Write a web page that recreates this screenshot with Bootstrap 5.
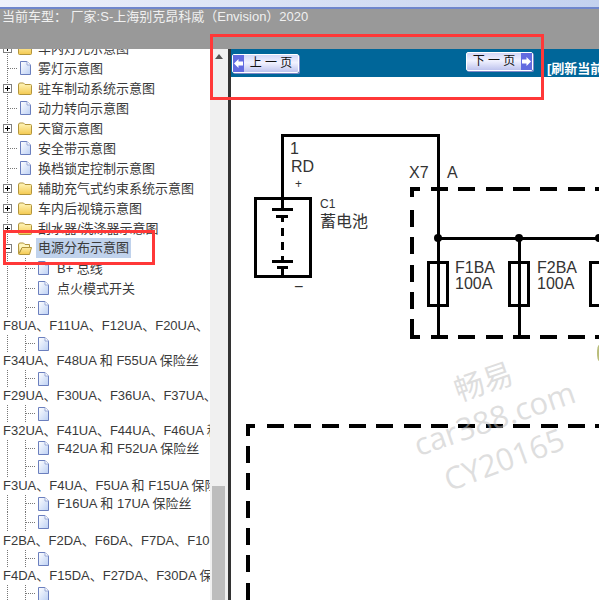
<!DOCTYPE html>
<html lang="zh-CN">
<head>
  <meta charset="UTF-8">
  <meta name="viewport" content="width=device-width, initial-scale=1.0">
  <title>电源分布示意图</title>
  <link href="https://cdn.jsdelivr.net/npm/bootstrap@5.3.0/dist/css/bootstrap.min.css" rel="stylesheet">
  <style>
    body { font-family: "Liberation Sans", "Noto Sans CJK SC", sans-serif; font-size: 13px; color: #3a3a3a; background: #fff; }
    .app-frame { width: 599px; height: 600px; }

    .top-strip { height: 9px; background: linear-gradient(90deg, #eef1fb, #c3d1ef); border-bottom: 2px solid #6f86cc; }
    .car-bar { height: 40px; background: #999; color: #f0f0f0; font-size: 13px; line-height: 16px; padding: 0 0 0 2px; }

    .tree-pane { width: 210px; }
    .tree-list { margin-top: -11px; }
    .tree-row { height: 20px; white-space: nowrap; flex-shrink: 0; }
    .h-16 { height: 16px; }
    .h-17 { height: 17px; }
    .h-18 { height: 18px; }
    .h-19 { height: 19px; }
    .h-21 { height: 21px; }

    /* dotted tree guides */
    .guide-one { background-image: linear-gradient(#777 50%, transparent 50%); background-size: 1px 2px; background-position: 7px 0; background-repeat: repeat-y; }
    .guide-two {
      background-image: linear-gradient(#777 50%, transparent 50%), linear-gradient(#777 50%, transparent 50%);
      background-size: 1px 2px, 1px 2px;
      background-position: 7px 0, 25px 0;
      background-repeat: repeat-y, repeat-y;
    }
    .dots-one { width: 10px; margin-left: 8px; height: 1px; background: linear-gradient(90deg, #777 50%, transparent 50%) 0 0/2px 1px; }
    .dots-two { width: 10px; margin-left: 26px; height: 1px; background: linear-gradient(90deg, #777 50%, transparent 50%) 0 0/2px 1px; }

    .plus-box { width: 9px; height: 9px; margin-left: 3px; margin-right: 6px; background: #fff; flex-shrink: 0; }
    .node-icon { width: 14px; height: 16px; flex-shrink: 0; }
    .node-text { margin-left: 5px; padding: 0 1px; line-height: 19px; }
    .node-text.leaf-gap { margin-left: 6px; }
    .node-selected { background: #c0d2ec; margin-left: 4px; padding: 0 2px; }
    .wrap-text { padding-left: 3px; line-height: 17px; background: #fff; }

    .side-scroll { width: 18px; background: #f0f0f0; }
    .scroll-arrow { border: 4px solid transparent; border-bottom: 5px solid #555; border-top: 0; margin: 5px auto 0; width: 0; }
    .scroll-thumb { width: 13px; height: 114px; background: #bdbdbd; margin-left: 2px; }
    .pane-split { width: 3px; background: #333; }

    .tool-band { height: 28px; background: #006699; white-space: nowrap; flex-shrink: 0; }
    .page-btn { width: 67px; height: 19px; padding: 0; border: 1px solid #fff; border-radius: 2px; background: linear-gradient(#d3d7f7, #f1f2ff 45%, #bfc4ee); color: #111; font-size: 12px; line-height: 17px; flex-shrink: 0; box-shadow: 1px 1px 0 #8088c8; }
    .page-btn:hover { background: #dfe2fb; color: #111; }
    .btn-prev { margin: 5px 0 0 1px; }
    .btn-next { margin: 3px 0 0 167px; }
    .btn-arrow { width: 11px; height: 17px; background: #626be0; flex-shrink: 0; }
    .refresh-link { color: #fff; font-weight: 700; font-size: 13px; margin: 12px 0 0 14px; line-height: 16px; }

    .wiring { display: block; }
    .wire { fill: none; stroke: #000; stroke-width: 3; shape-rendering: crispEdges; }
    .wire-dash { fill: none; stroke: #000; stroke-width: 3.6; stroke-dasharray: 17 10.35; shape-rendering: crispEdges; }
    .wire-label { font-family: "Liberation Sans", "Noto Sans CJK SC", sans-serif; font-size: 16px; fill: #333; }
    .wire-small { font-size: 12px; }
    .mark-text { font-family: "Open Sans", "Noto Sans CJK SC", sans-serif; fill: #bdbdbd; fill-opacity: .5; }

    .red-frame { position: absolute; border: 3px solid #ff3838; pointer-events: none; }
    .frame-top { left: 210px; top: 34px; width: 334px; height: 66px; }
    .frame-tree { left: 3px; top: 230px; width: 152px; height: 35px; }
  </style>
</head>
<body>
  <svg width="0" height="0" class="position-absolute">
    <defs>
      <linearGradient id="docFill" x1="0" y1="0" x2="1" y2="1"><stop offset="0" stop-color="#fff"/><stop offset="1" stop-color="#bcd0f4"/></linearGradient>
      <linearGradient id="folderFill" x1="0" y1="0" x2="0" y2="1"><stop offset="0" stop-color="#fff6bd"/><stop offset="1" stop-color="#f4c94f"/></linearGradient>
      <symbol id="doc" viewBox="0 0 14 16">
        <path d="M2.5 1.5H9L12.5 5V14.5H2.5Z" fill="url(#docFill)" stroke="#6b7fbe"/>
        <path d="M9 1.5V5H12.5" fill="#fff" stroke="#9aaad8"/>
      </symbol>
      <symbol id="folder" viewBox="0 0 14 16">
        <path d="M.5 5V13.5Q.5 14.5 1.5 14.5H12.5Q13.5 14.5 13.5 13.5V5.5Q13.5 4.5 12.5 4.5H7L5.5 3H2Q.5 3 .5 5Z" fill="url(#folderFill)" stroke="#b2953c"/>
      </symbol>
      <symbol id="folderOpen" viewBox="0 0 14 16">
        <path d="M.5 5V13.5Q.5 14.5 1.5 14.5H11.5L13.5 7.5H4L1.5 13" fill="url(#folderFill)" stroke="#b2953c"/>
        <path d="M.5 5Q.5 3 2 3H5.5L7 4.5H11.5V7.5H4L1 13.5Z" fill="#fff6bd" stroke="#b2953c"/>
      </symbol>
      <symbol id="plus" viewBox="0 0 9 9">
        <rect x=".5" y=".5" width="8" height="8" fill="#fff" stroke="#7f7f7f"/><path d="M2 4.5H7M4.5 2V7" stroke="#000"/>
      </symbol>
      <symbol id="minus" viewBox="0 0 9 9">
        <rect x=".5" y=".5" width="8" height="8" fill="#fff" stroke="#7f7f7f"/><path d="M2 4.5H7" stroke="#000"/>
      </symbol>
    </defs>
  </svg>

  <div class="app-frame position-relative d-flex flex-column overflow-hidden">
    <div class="top-strip flex-shrink-0"></div>
    <div class="car-bar flex-shrink-0">当前车型： 厂家:S-上海别克昂科威（Envision）2020</div>

    <div class="d-flex flex-grow-1 overflow-hidden">
      <!-- tree -->
      <div class="tree-pane overflow-hidden flex-shrink-0">
        <div class="tree-list d-flex flex-column">
          <div class="tree-row guide-one d-flex align-items-center"><svg class="plus-box"><use href="#plus"/></svg><svg class="node-icon"><use href="#folder"/></svg><span class="node-text">车内灯光示意图</span></div>
          <div class="tree-row guide-one d-flex align-items-center"><span class="dots-one"></span><svg class="node-icon"><use href="#doc"/></svg><span class="node-text">雾灯示意图</span></div>
          <div class="tree-row guide-one d-flex align-items-center"><svg class="plus-box"><use href="#plus"/></svg><svg class="node-icon"><use href="#folder"/></svg><span class="node-text">驻车制动系统示意图</span></div>
          <div class="tree-row guide-one d-flex align-items-center"><span class="dots-one"></span><svg class="node-icon"><use href="#doc"/></svg><span class="node-text">动力转向示意图</span></div>
          <div class="tree-row guide-one d-flex align-items-center"><svg class="plus-box"><use href="#plus"/></svg><svg class="node-icon"><use href="#folder"/></svg><span class="node-text">天窗示意图</span></div>
          <div class="tree-row guide-one d-flex align-items-center"><span class="dots-one"></span><svg class="node-icon"><use href="#doc"/></svg><span class="node-text">安全带示意图</span></div>
          <div class="tree-row guide-one d-flex align-items-center"><span class="dots-one"></span><svg class="node-icon"><use href="#doc"/></svg><span class="node-text">换档锁定控制示意图</span></div>
          <div class="tree-row guide-one d-flex align-items-center"><svg class="plus-box"><use href="#plus"/></svg><svg class="node-icon"><use href="#folder"/></svg><span class="node-text">辅助充气式约束系统示意图</span></div>
          <div class="tree-row guide-one d-flex align-items-center"><svg class="plus-box"><use href="#plus"/></svg><svg class="node-icon"><use href="#folder"/></svg><span class="node-text">车内后视镜示意图</span></div>
          <div class="tree-row guide-one d-flex align-items-center"><svg class="plus-box"><use href="#plus"/></svg><svg class="node-icon"><use href="#folder"/></svg><span class="node-text">刮水器/洗涤器示意图</span></div>
          <div class="tree-row guide-one d-flex align-items-center"><svg class="plus-box"><use href="#minus"/></svg><svg class="node-icon"><use href="#folderOpen"/></svg><span class="node-selected">电源分布示意图</span></div>

          <div class="tree-row guide-two d-flex align-items-center"><span class="dots-two"></span><svg class="node-icon"><use href="#doc"/></svg><span class="node-text leaf-gap">B+ 总线</span></div>
          <div class="tree-row guide-two d-flex align-items-center"><span class="dots-two"></span><svg class="node-icon"><use href="#doc"/></svg><span class="node-text leaf-gap">点火模式开关</span></div>
          <div class="tree-row h-19 guide-two d-flex align-items-center"><span class="dots-two"></span><svg class="node-icon"><use href="#doc"/></svg></div>
          <div class="tree-row h-18 wrap-text">F8UA、F11UA、F12UA、F20UA、</div>
          <div class="tree-row h-17 guide-two d-flex align-items-center"><span class="dots-two"></span><svg class="node-icon"><use href="#doc"/></svg></div>
          <div class="tree-row h-18 wrap-text">F34UA、F48UA 和 F55UA 保险丝</div>
          <div class="tree-row h-17 guide-two d-flex align-items-center"><span class="dots-two"></span><svg class="node-icon"><use href="#doc"/></svg></div>
          <div class="tree-row h-18 wrap-text">F29UA、F30UA、F36UA、F37UA、</div>
          <div class="tree-row h-17 guide-two d-flex align-items-center"><span class="dots-two"></span><svg class="node-icon"><use href="#doc"/></svg></div>
          <div class="tree-row h-18 wrap-text">F32UA、F41UA、F44UA、F46UA 和</div>
          <div class="tree-row h-16 guide-two d-flex align-items-center"><span class="dots-two"></span><svg class="node-icon"><use href="#doc"/></svg><span class="node-text leaf-gap">F42UA 和 F52UA 保险丝</span></div>
          <div class="tree-row h-21 guide-two d-flex align-items-center"><span class="dots-two"></span><svg class="node-icon"><use href="#doc"/></svg></div>
          <div class="tree-row h-18 wrap-text">F3UA、F4UA、F5UA 和 F15UA 保险丝</div>
          <div class="tree-row h-17 guide-two d-flex align-items-center"><span class="dots-two"></span><svg class="node-icon"><use href="#doc"/></svg><span class="node-text leaf-gap">F16UA 和 17UA 保险丝</span></div>
          <div class="tree-row guide-two d-flex align-items-center"><span class="dots-two"></span><svg class="node-icon"><use href="#doc"/></svg></div>
          <div class="tree-row h-18 wrap-text">F2BA、F2DA、F6DA、F7DA、F10DA</div>
          <div class="tree-row h-17 guide-two d-flex align-items-center"><span class="dots-two"></span><svg class="node-icon"><use href="#doc"/></svg></div>
          <div class="tree-row h-18 wrap-text">F4DA、F15DA、F27DA、F30DA 保险丝</div>
          <div class="tree-row h-17 guide-two d-flex align-items-center"><span class="dots-two"></span><svg class="node-icon"><use href="#doc"/></svg></div>
        </div>
      </div>

      <!-- scrollbar of the tree -->
      <div class="side-scroll d-flex flex-column flex-shrink-0">
        <div class="scroll-arrow"></div>
        <div class="scroll-thumb mt-auto"></div>
      </div>
      <div class="pane-split flex-shrink-0"></div>

      <!-- diagram page -->
      <div class="flex-grow-1 d-flex flex-column overflow-hidden">
        <div class="tool-band d-flex align-items-start overflow-hidden">
          <button type="button" class="btn page-btn btn-prev d-flex align-items-center">
            <span class="btn-arrow d-flex align-items-center justify-content-center"><svg width="9" height="9" viewBox="0 0 9 9"><path d="M0 4.5L4.5 0V2.5H9V6.5H4.5V9Z" fill="#fff"/></svg></span>
            <span class="flex-grow-1 text-center">上 一 页</span>
          </button>
          <button type="button" class="btn page-btn btn-next d-flex align-items-center">
            <span class="flex-grow-1 text-center">下 一 页</span>
            <span class="btn-arrow d-flex align-items-center justify-content-center"><svg width="9" height="9" viewBox="0 0 9 9"><path d="M9 4.5L4.5 0V2.5H0V6.5H4.5V9Z" fill="#fff"/></svg></span>
          </button>
          <span class="refresh-link">[刷新当前页]</span>
        </div>

        <svg class="wiring" width="368" height="523" viewBox="231 77 368 523">
          <!-- battery -->
          <path class="wire" d="M282 198V135H438V337"/>
          <rect class="wire" x="255.5" y="198.5" width="55" height="78"/>
          <path class="wire" d="M272 209.5H293M276 216H288M282.5 198V209M282.5 216V222M282.5 228V236M282.5 242V250M282.5 256V261M272 261.5H293M277 267.5H288M282.5 267V277"/>
          <text class="wire-label" x="290" y="154">1</text>
          <text class="wire-label" x="291" y="172">RD</text>
          <text class="wire-label wire-small" x="295" y="188">+</text>
          <text class="wire-label" x="294" y="292">−</text>
          <text class="wire-label wire-small" x="320" y="208">C1</text>
          <text class="wire-label" x="320" y="227">蓄电池</text>

          <!-- fuse block X7 -->
          <text class="wire-label" x="409" y="178">X7</text>
          <text class="wire-label" x="447" y="178">A</text>
          <path class="wire-dash" d="M412 197V189H420" stroke-dasharray="none"/>
          <path class="wire-dash" d="M431 189H599"/>
          <path class="wire-dash" d="M412 210V337"/>
          <path class="wire-dash" d="M412 328V337H420" stroke-dasharray="none"/>
          <path class="wire-dash" d="M431 337H599"/>
          <path class="wire" d="M438 238H599M519 238V337"/>
          <circle cx="438" cy="238" r="4"/>
          <circle cx="519" cy="238" r="4"/>
          <circle cx="599" cy="238" r="4"/>
          <rect class="wire" x="428.5" y="262.5" width="19" height="43" />
          <rect class="wire" x="509.5" y="262.5" width="19" height="43" />
          <rect class="wire" x="590.5" y="262.5" width="19" height="43" />
          <text class="wire-label" x="455" y="273">F1BA</text>
          <text class="wire-label" x="455" y="289">100A</text>
          <text class="wire-label" x="537" y="273">F2BA</text>
          <text class="wire-label" x="537" y="289">100A</text>
          <ellipse cx="599" cy="353" rx="2" ry="8" fill="#b9bd7a"/>

          <!-- lower block -->
          <path class="wire-dash" d="M248 436V426H257" stroke-dasharray="none"/>
          <path class="wire-dash" d="M267 426H599"/>
          <path class="wire-dash" d="M248 446V600"/>

          <!-- watermark -->
          <text class="mark-text" font-size="30" text-anchor="middle" transform="translate(487 392) rotate(-19)">畅易</text>
          <text class="mark-text" font-size="31" text-anchor="middle" transform="translate(498 429) rotate(-19)">car388.com</text>
          <text class="mark-text" font-size="31" text-anchor="middle" transform="translate(508 470) rotate(-20)">CY20165</text>
        </svg>
      </div>
    </div>

    <div class="red-frame frame-top"></div>
    <div class="red-frame frame-tree"></div>
  </div>

  <script src="https://cdn.jsdelivr.net/npm/bootstrap@5.3.0/dist/js/bootstrap.bundle.min.js"></script>
</body>
</html>
